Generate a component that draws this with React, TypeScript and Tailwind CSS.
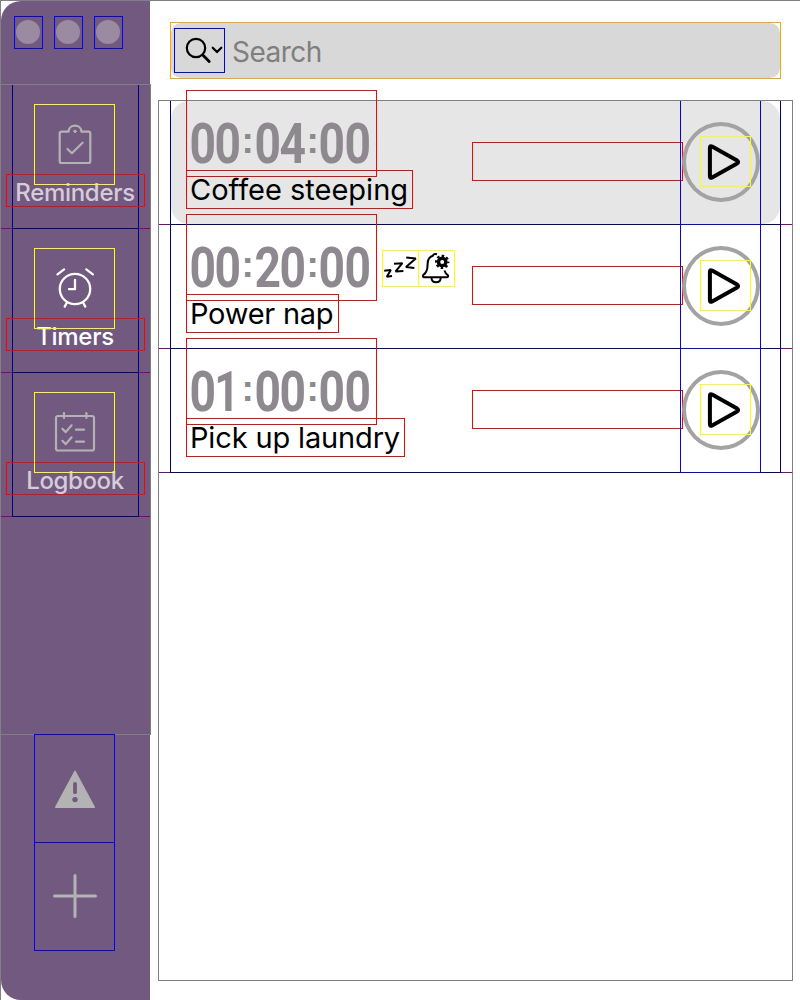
import React from "react";

type TimerRowProps = {
  time: string;
  name: string;
  nameWidth: string;
  spacing: string;
  selected?: boolean;
  badges?: boolean;
};

function NavItem({ label, color, spacing, children }: { label: string; color: string; spacing: string; children: React.ReactNode }) {
  return (
    <li className="h-36 border-b border-[#800080]">
      <div className="ml-[11px] flex h-36 w-[127px] flex-col border-x border-b border-[#000080]">
        <div className="relative z-10 mt-[19px] ml-[21px] size-[81px] shrink-0 border border-[#ffff00]">{children}</div>
        <div className={`-mt-[11px] -ml-[7px] flex h-[33px] w-[139px] shrink-0 items-center justify-center border border-[#ff0000] pt-1 pr-px text-[24px] leading-none font-medium ${spacing} ${color}`}>
          <span>{label}</span>
        </div>
      </div>
    </li>
  );
}

function digitClass(c: string) {
  if (c === ":") return "block -translate-y-[2px] font-['Liberation_Sans',sans-serif] text-[37px]";
  if (c === "1") return "block -translate-x-[1px] translate-y-[2px] scale-x-[0.8]";
  return "block translate-y-[2px] scale-x-[0.84]";
}

function Digits({ time }: { time: string }) {
  return (
    <div className="flex h-[87px] w-[191px] shrink-0 items-center border border-[#ff0000] pl-[3px] pt-[18px] font-['Roboto',sans-serif] text-[55px] leading-none font-bold text-[#8e888f]">
      {time.split("").map((c, i) => (
        <span key={i} className={c === ":" ? "flex w-[14px] justify-center" : "flex w-[25.4px] justify-center"}>
          <span className={digitClass(c)}>{c}</span>
        </span>
      ))}
    </div>
  );
}

function PlayButton() {
  return (
    <button className="-mb-px -ml-[3px] flex h-[124px] w-[81px] shrink-0 flex-col border-x border-b border-[#0000ff]">
      <span className="mt-[21px] ml-px flex h-[80px] w-[78px] rounded-[50%] border-4 border-[#a3a3a3]">
        <span className="mt-[10px] ml-[14px] block size-[51px] shrink-0 border border-[#ffff00]">
          <svg className="block size-[49px]" viewBox="701 137 49 49" fill="none" stroke="#000" strokeWidth="4" strokeLinejoin="round">
            <path d="M709.9 147.8v28.4q0 2.3 2.2 1.2l25-13.9q2-1.5 0-3l-25-13.9q-2.2-1.1-2.2 1.2Z" />
          </svg>
        </span>
      </span>
    </button>
  );
}

function TimerRow({ time, name, nameWidth, spacing, selected, badges }: TimerRowProps) {
  return (
    <li className="h-[124px] border-b border-[#800080]">
      <div className="mx-[11px] h-[124px] border-x border-b border-[#000080]">
        <div className={`flex h-[123px] rounded-[18px] ${selected ? "bg-[#e6e6e6]" : ""}`}>
          <div className="-mt-[11px] ml-[15px] w-[286px] shrink-0">
            <div className="flex">
              <Digits time={time} />
              {badges && (
                <div className="mt-9 ml-[5px] flex">
                  <svg className="block size-[37px] border border-[#ffff00]" viewBox="383 251 35 35" fill="none" stroke="#000" strokeWidth="2" strokeLinejoin="bevel">
                    <path d="m384.2 270.7 6.6-.7-4 6.7 5.2-.6M394 263.8l8.4-.6-6.8 8.2 7.8-.3M406.2 257.5l9.6 1-9.8 8.4 8.4 1.2" />
                  </svg>
                  <svg className="-ml-px block size-[37px] border border-[#ffff00]" viewBox="419 251 35 35" fill="none" stroke="#000" strokeWidth="2">
                    <path d="M437 254.2c-2-.8-3.8 0-4.2 1.6-3 .8-5.2 4-5.2 8.4 0 5.6-1.7 9-4 10.4-.8.7-.9 2.7.2 2.7h23.3c1.2 0 1.3-1.7.4-2.4-1.6-1.1-2.4-2.5-3.1-4.4M431.5 278c.3 5.7 9 5.7 9.2 0" />
                    <circle cx="442.2" cy="261.9" r="3.7" strokeWidth="3.4" />
                    <circle cx="442.2" cy="261.9" r="6.1" strokeWidth="2.2" strokeDasharray="2.5 2.29" strokeDashoffset="1.25" />
                  </svg>
                </div>
              )}
            </div>
            <div className={`-mt-[7px] flex h-[39px] items-center border border-[#ff0000] pl-[3px] text-[29px] leading-none whitespace-nowrap ${spacing} ${nameWidth}`}>
              <span>{name}</span>
            </div>
          </div>
          <div className="mt-[41px] h-[39px] w-[211px] shrink-0 border border-[#ff0000]" />
          <PlayButton />
        </div>
      </div>
    </li>
  );
}

export default function App() {
  return (
    <div className="flex h-[1000px] w-[800px] overflow-hidden border-t border-l border-[#808080] bg-white font-['Inter',sans-serif] text-black">
      <aside className="flex h-[999px] w-[149px] shrink-0 flex-col rounded-l-[20px] bg-[#71597f]">
        <div className="flex h-[83px] shrink-0 gap-[11px] pt-[15px] pl-[13px]">
          {[0, 1, 2].map((n) => (
            <div key={n} className="flex h-[33px] w-[29px] items-center justify-center border border-[#0000ff]">
              <span className="mr-px mb-px size-6 shrink-0 rounded-full bg-[#9b8ba1]" />
            </div>
          ))}
        </div>
        <nav className="-ml-px h-[651px] w-[151px] shrink-0 border border-[#808080]">
          <ul>
            <NavItem label="Reminders" color="text-[#d6ccd9]" spacing="tracking-[-0.3px]">
              <svg className="block size-[79px]" viewBox="35 105 79 79" fill="none" stroke="#b3b3b3" strokeWidth="2.2" strokeLinecap="round" strokeLinejoin="round">
                <path d="M68.6 131.7h-7.1q-1.8 0-1.8 1.8v27.7q0 1.8 1.8 1.8h27q1.8 0 1.8-1.8v-27.7q0-1.8-1.8-1.8h-7.1c0-3.8-2.8-6-6.4-6s-6.4 2.2-6.4 6ZM67.5 149l4.4 4.2 10.7-10.5" />
                <circle cx="75" cy="131.3" r="1.2" fill="#b3b3b3" strokeWidth="1" />
              </svg>
            </NavItem>
            <NavItem label="Timers" color="text-white" spacing="tracking-[-0.3px]">
              <svg className="block size-[79px]" viewBox="35 249 79 79" fill="none" stroke="#fff" strokeWidth="2.3" strokeLinecap="round" strokeLinejoin="round">
                <circle cx="75" cy="289" r="15.2" />
                <path d="M75 280v9.2h-6M57.5 274.3l6.6-4.9M86.3 269.4l6.6 4.9M66.7 303l-2 3.6M83.3 303l2 3.6" />
              </svg>
            </NavItem>
            <NavItem label="Logbook" color="text-[#d6ccd9]" spacing="tracking-[-0.4px]">
              <svg className="block size-[79px]" viewBox="35 393 79 79" fill="none" stroke="#b3b3b3" strokeWidth="2.2" strokeLinecap="round" strokeLinejoin="round">
                <rect x="56" y="416" width="38" height="34.5" rx="2" />
                <path d="M64 413v5M86.4 413v5M62.4 428.8l3.3 3.3 5.9-6.8M62.4 440.8l3.3 3.3 5.9-6.8M76 429.7h8M76 441.7h8" />
              </svg>
            </NavItem>
          </ul>
        </nav>
        <button className="-mt-px ml-[33px] h-[109px] w-[81px] shrink-0 border border-[#0000ff]">
          <svg className="block h-[107px] w-[79px]" viewBox="35 735 79 107">
            <path d="M74.2 771.2q.8-1.2 1.6 0l19.1 35.6q.4 1.2-.8 1.2H55.9q-1.2 0-.8-1.2Z" fill="#b3b3b3" />
            <path d="M75 783.8v8.4" stroke="#71597f" strokeWidth="3.8" strokeLinecap="round" />
            <circle cx="75" cy="799.6" r="2.7" fill="#71597f" />
          </svg>
        </button>
        <button className="-mt-px ml-[33px] h-[109px] w-[81px] shrink-0 border border-[#0000ff]">
          <svg className="block h-[107px] w-[79px]" viewBox="35 843 79 107">
            <path d="M75 875.5v41M54.5 896h41" fill="none" stroke="#b3b3b3" strokeWidth="3" strokeLinecap="round" />
          </svg>
        </button>
      </aside>
      <main className="flex min-w-0 flex-1 flex-col pt-[21px] pl-2">
        <label className="ml-3 flex h-[57px] w-[611px] shrink-0 border border-[#ffa500]">
          <span className="flex w-full rounded-[10px] bg-[#d8d8d8]">
            <svg className="mt-[5px] ml-[3px] block h-[45px] w-[51px] shrink-0 border border-[#0000ff]" viewBox="175 29 49 43" fill="none" stroke="#000" strokeWidth="2.2" strokeLinecap="round" strokeLinejoin="round">
              <circle cx="196" cy="48" r="9.2" />
              <path d="m202.8 55 6.4 6.5" strokeWidth="2.8" />
              <path d="m212.7 47.7 4.3 4.4 4.3-4.4" />
            </svg>
            <span className="flex items-center pt-[3px] pl-[7px] text-[28px] leading-none tracking-[-0.5px] text-[#7f7f7f]">Search</span>
          </span>
        </label>
        <ul className="mt-[21px] h-[881px] w-[635px] shrink-0 border border-[#808080]">
          <TimerRow time="00:04:00" name="Coffee steeping" nameWidth="w-[227px]" spacing="tracking-[0px]" selected />
          <TimerRow time="00:20:00" name="Power nap" nameWidth="w-[153px]" spacing="tracking-[-0.25px]" badges />
          <TimerRow time="01:00:00" name="Pick up laundry" nameWidth="w-[219px]" spacing="tracking-[-0.15px]" />
        </ul>
      </main>
    </div>
  );
}
